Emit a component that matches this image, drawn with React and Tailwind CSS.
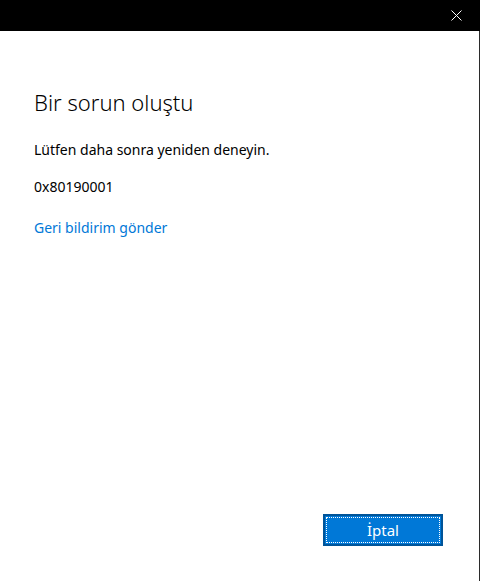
import React from 'react';

const App = () => {
    return (
        <div className="w-[480px] h-[581px] flex flex-col bg-white overflow-hidden" style={{ fontFamily: '"Noto Sans", "Open Sans", sans-serif' }}>
            <div className="h-[31px] bg-black flex items-center justify-end pr-[18px] shrink-0">
                <svg width="11" height="11" viewBox="0 0 11 11" className="text-white">
                    <path d="M0.5 0.5 L10.5 10.5 M10.5 0.5 L0.5 10.5" stroke="currentColor" strokeWidth="1" />
                </svg>
            </div>
            <div className="flex-1 flex flex-col border-r border-[#2b2b2b] pl-[34px] pr-[36px]">
                <h1 className="mt-[56px] text-[22px] leading-[30px] font-light text-black">Bir sorun oluştu</h1>
                <p className="mt-[23px] text-[14px] leading-[20px] text-black">Lütfen daha sonra yeniden deneyin.</p>
                <p className="mt-[17px] text-[14px] leading-[20px] text-black">0x80190001</p>
                <a className="mt-[21px] text-[14px] leading-[20px] text-[#0078d7] w-fit cursor-pointer">Geri bildirim gönder</a>
                <div className="flex-1" />
                <div className="flex justify-end mb-[35px]">
                    <button className="w-[120px] h-[32px] bg-[#0078d7] border-2 border-[#005499] p-[1px] text-white text-[15px]">
                        <div className="w-full h-full border border-dotted border-white flex items-center justify-center">İptal</div>
                    </button>
                </div>
            </div>
        </div>
    );
};

export default App;
